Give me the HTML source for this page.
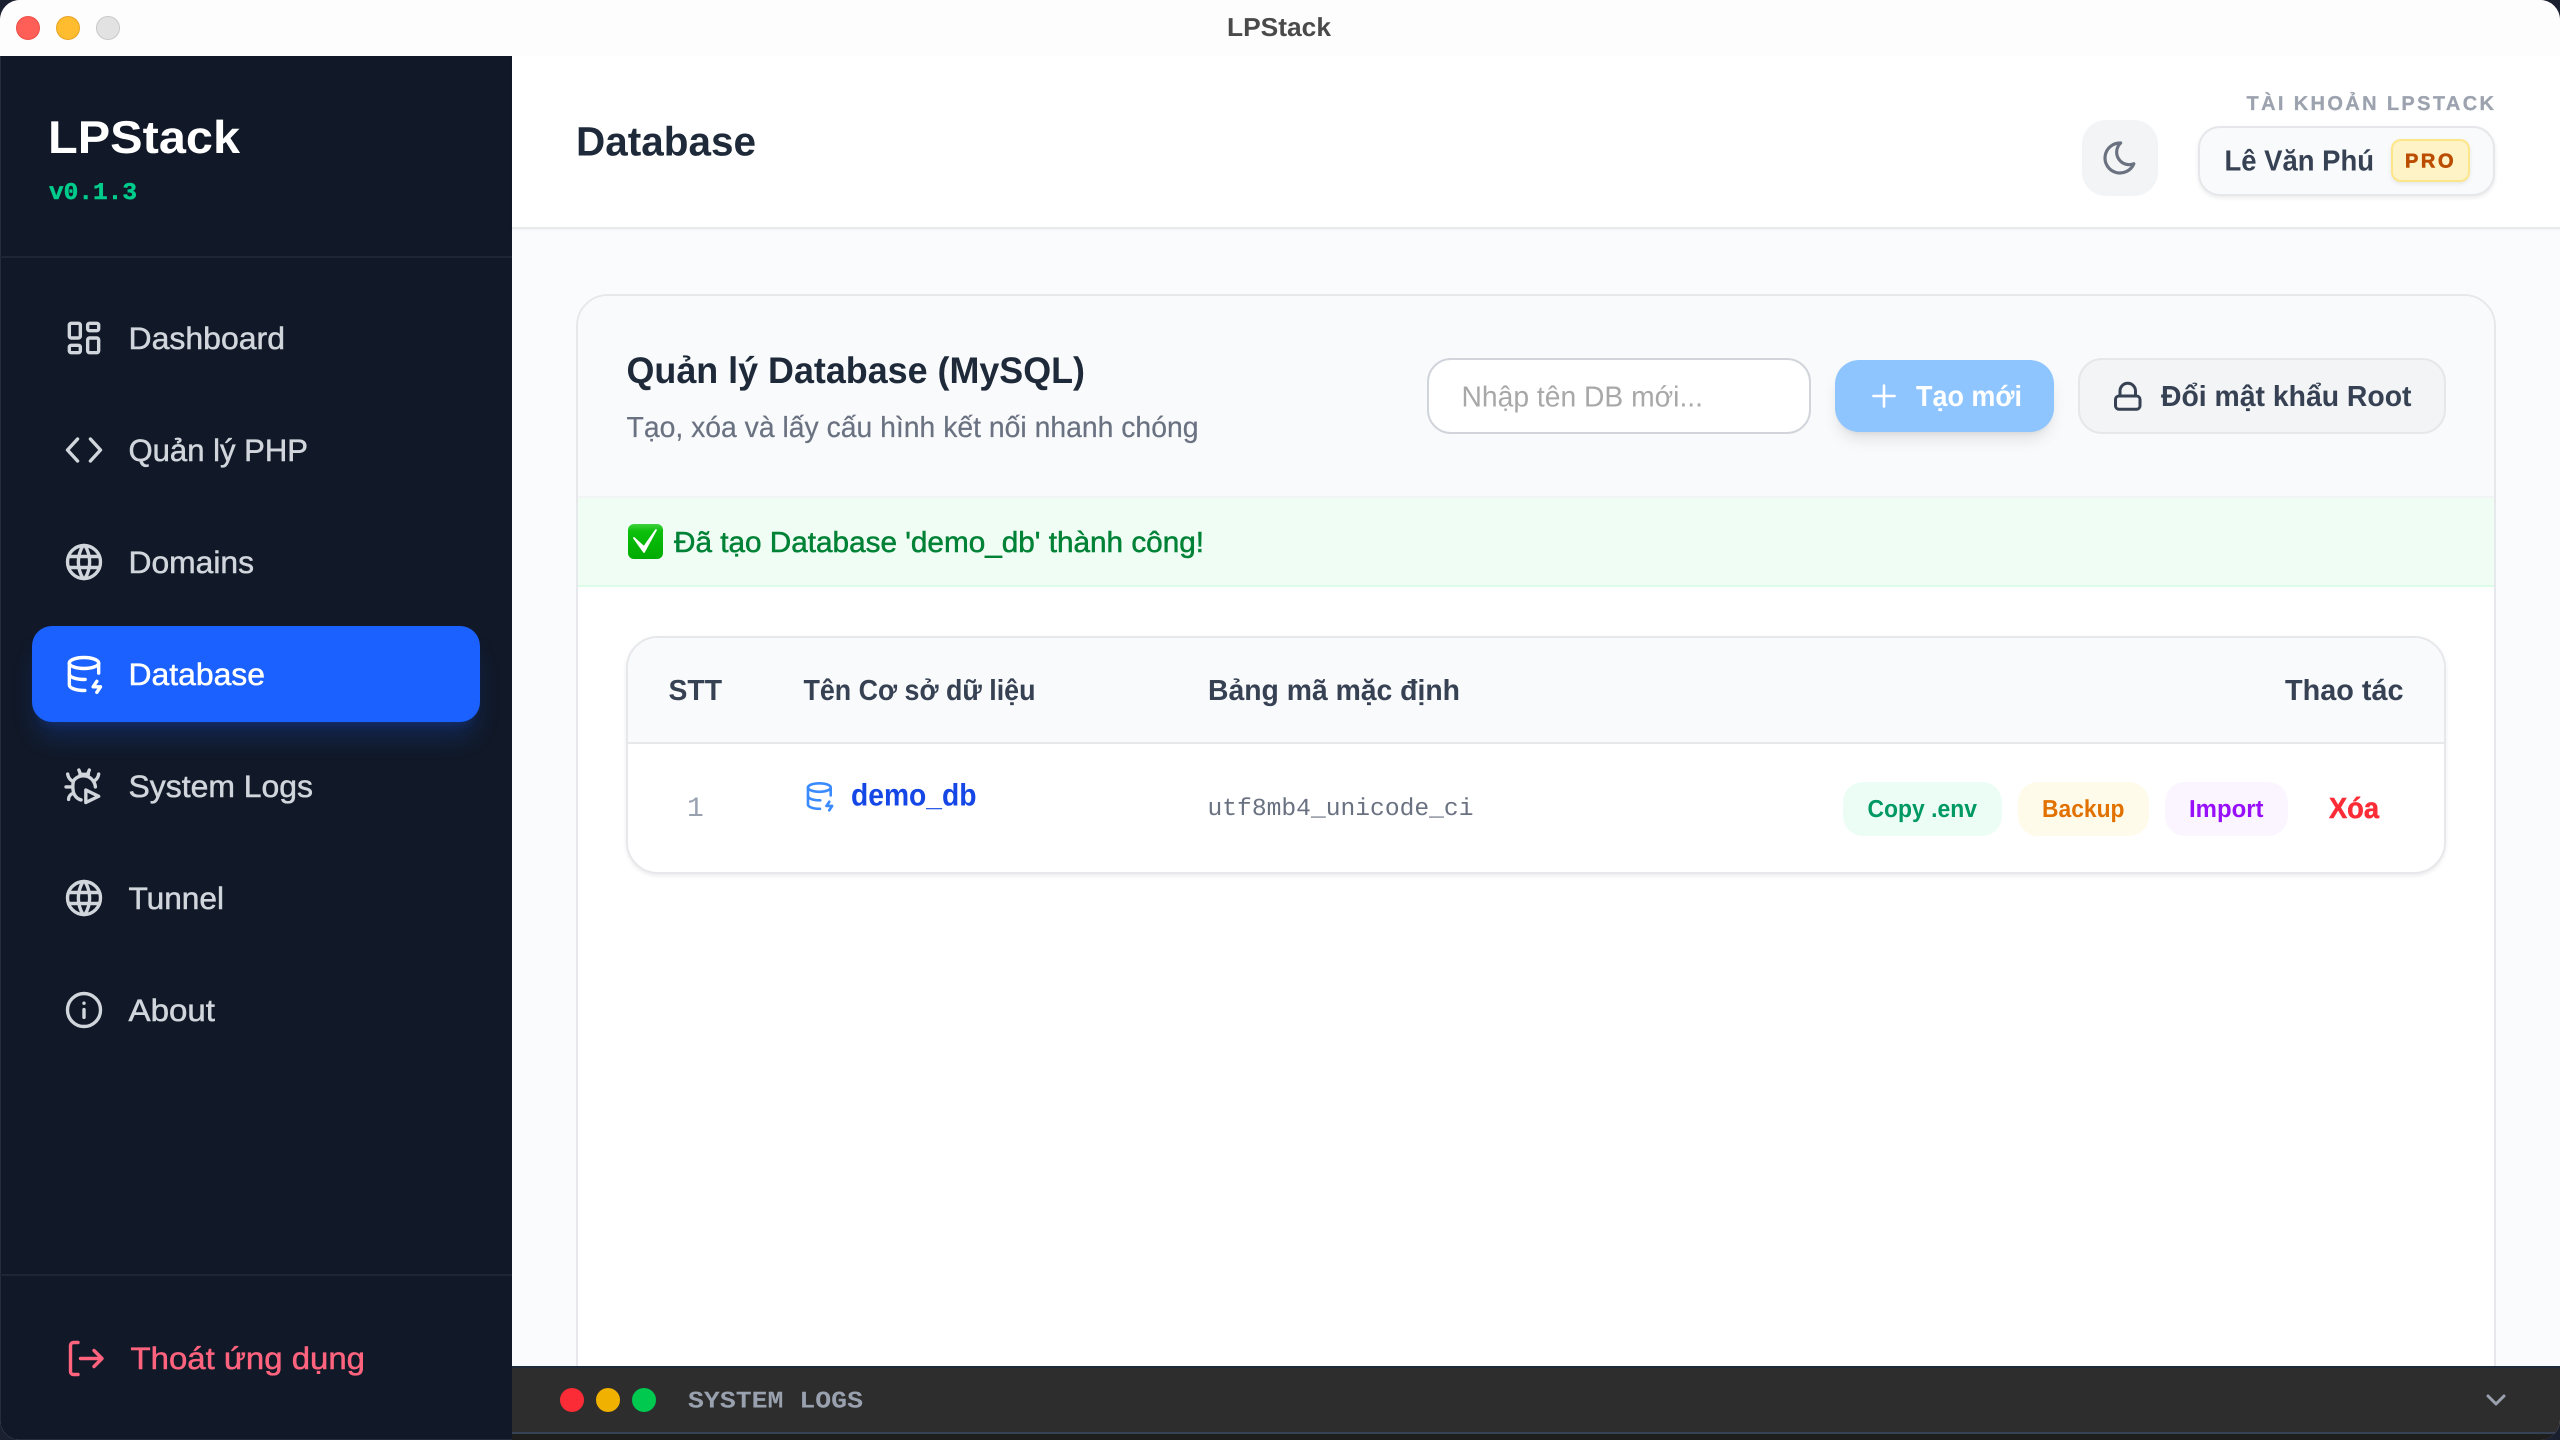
<!DOCTYPE html>
<html lang="vi">
<head>
<meta charset="utf-8">
<title>LPStack</title>
<style>
html,body{margin:0;padding:0;width:2560px;height:1440px;overflow:hidden;background:#1b2030}
.a{position:absolute;box-sizing:border-box}
#win{position:absolute;left:0;top:0;width:2560px;height:1440px;border-radius:20px;overflow:hidden;background:#fafbfc}
svg#ov{position:absolute;left:0;top:0;width:2560px;height:1440px;pointer-events:none}
text{font-family:"Liberation Sans","DejaVu Sans",sans-serif;text-rendering:geometricPrecision}
.mono{font-family:"Liberation Mono","DejaVu Sans Mono",monospace}
.b{font-weight:700}
.m{stroke-width:.5px}
.ic{fill:none;stroke-width:1.85;stroke-linecap:round;stroke-linejoin:round}
</style>
</head>
<body>
<div id="win">
  <!-- title bar -->
  <div class="a" style="left:0;top:0;width:2560px;height:56px;background:#fdfdfd"></div>
  <div class="a" style="left:16px;top:16px;width:24px;height:24px;border-radius:50%;background:#ff5f57;border:1px solid #ee4f48"></div>
  <div class="a" style="left:56px;top:16px;width:24px;height:24px;border-radius:50%;background:#febc2e;border:1px solid #e6a526"></div>
  <div class="a" style="left:96px;top:16px;width:24px;height:24px;border-radius:50%;background:#e2e2e2;border:1px solid #c8c8cc"></div>

  <!-- sidebar -->
  <div class="a" style="left:0;top:56px;width:512px;height:1384px;background:#111928;border-left:1px solid #262c3a;border-bottom:1px solid #262c3a"></div>
  <div class="a" style="left:0;top:256px;width:512px;height:2px;background:#1c2635"></div>
  <div class="a" style="left:0;top:1274px;width:512px;height:2px;background:#1c2635"></div>
  <div class="a" style="left:32px;top:626px;width:448px;height:96px;border-radius:20px;background:#1a61ff;box-shadow:0 20px 25px -5px rgba(26,97,255,.2),0 8px 10px -6px rgba(26,97,255,.2)"></div>

  <!-- header -->
  <div class="a" style="left:512px;top:56px;width:2048px;height:173px;background:#fff;border-bottom:2px solid #e8e9ec;box-shadow:0 1px 2px rgba(0,0,0,.04)"></div>
  <div class="a" style="left:2082px;top:120px;width:76px;height:76px;border-radius:24px;background:#f3f4f6"></div>
  <div class="a" style="left:2198px;top:126px;width:297px;height:70px;border-radius:22px;background:#f9fafb;border:2px solid #e5e7eb;box-shadow:0 2px 4px rgba(0,0,0,.08)"></div>
  <div class="a" style="left:2391px;top:139px;width:79px;height:43px;border-radius:10px;background:#fef3c7;border:2px solid #fde68a;box-shadow:0 2px 4px rgba(0,0,0,.08)"></div>

  <!-- card -->
  <div class="a" style="left:576px;top:294px;width:1920px;height:1200px;border-radius:32px;background:#fff;border:2px solid #e7e8eb;overflow:hidden">
    <div class="a" style="left:0;top:0;width:1916px;height:200px;background:#f9fafb"></div>
    <div class="a" style="left:0;top:200px;width:1916px;height:91px;background:#f0fdf4;border-top:2px solid #f3f4f6;border-bottom:2px solid #dcfce7"></div>
  </div>
  <div class="a" style="left:1427px;top:358px;width:384px;height:76px;border-radius:24px;background:#fff;border:2px solid #d1d5db"></div>
  <div class="a" style="left:1835px;top:360px;width:219px;height:72px;border-radius:24px;background:#8ec5ff;box-shadow:0 10px 15px -3px rgba(0,0,0,.1),0 4px 6px -4px rgba(0,0,0,.1)"></div>
  <div class="a" style="left:2078px;top:358px;width:368px;height:76px;border-radius:24px;background:#f3f4f6;border:2px solid #e5e7eb"></div>

  <!-- table -->
  <div class="a" style="left:626px;top:636px;width:1820px;height:238px;border-radius:32px;background:#fff;border:2px solid #e7e8eb;box-shadow:0 2px 4px rgba(0,0,0,.08);overflow:hidden">
    <div class="a" style="left:0;top:0;width:1816px;height:106px;background:#f9fafb;border-bottom:2px solid #e7e8eb"></div>
  </div>
  <div class="a" style="left:1843px;top:782px;width:159px;height:54px;border-radius:20px;background:#ecfdf5"></div>
  <div class="a" style="left:2018px;top:782px;width:131px;height:54px;border-radius:20px;background:#fffbeb"></div>
  <div class="a" style="left:2165px;top:782px;width:123px;height:54px;border-radius:20px;background:#faf5ff"></div>

  <!-- log bar -->
  <div class="a" style="left:512px;top:1366px;width:2048px;height:74px;background:#2d2d2d;border-top:2px solid #1e2939"></div>
  <div class="a" style="left:512px;top:1432px;width:2048px;height:2px;background:#364153"></div>
  <div class="a" style="left:512px;top:1434px;width:2048px;height:6px;background:#1e1e1e"></div>
  <div class="a" style="left:560px;top:1388px;width:24px;height:24px;border-radius:50%;background:#fb2c36"></div>
  <div class="a" style="left:596px;top:1388px;width:24px;height:24px;border-radius:50%;background:#f0b100"></div>
  <div class="a" style="left:632px;top:1388px;width:24px;height:24px;border-radius:50%;background:#00c950"></div>

  <svg id="ov" xmlns="http://www.w3.org/2000/svg" viewBox="0 0 2560 1440">
    <!-- title bar -->
    <text x="1227" y="36" font-size="26" class="b" fill="#4a4a4a" textLength="104" lengthAdjust="spacingAndGlyphs">LPStack</text>

    <!-- logo -->
    <text x="48" y="153" font-size="46" class="b" fill="#fff" textLength="192" lengthAdjust="spacingAndGlyphs">LPStack</text>
    <text x="49" y="199" font-size="24" class="mono b m" fill="#00cc8c" stroke="#00cc8c" textLength="88" lengthAdjust="spacingAndGlyphs">v0.1.3</text>

    <!-- nav text -->
    <g font-size="31">
      <text x="128.5" y="349" class="m" fill="#d1d5dc" stroke="#d1d5dc" textLength="156.5" lengthAdjust="spacingAndGlyphs">Dashboard</text>
      <text x="128.5" y="461" class="m" fill="#d1d5dc" stroke="#d1d5dc" textLength="179.5" lengthAdjust="spacingAndGlyphs">Quản lý PHP</text>
      <text x="128.5" y="573" class="m" fill="#d1d5dc" stroke="#d1d5dc" textLength="125.5" lengthAdjust="spacingAndGlyphs">Domains</text>
      <text x="128.5" y="685" class="m" fill="#fff" stroke="#fff" textLength="136.5" lengthAdjust="spacingAndGlyphs">Database</text>
      <text x="128.5" y="797" class="m" fill="#d1d5dc" stroke="#d1d5dc" textLength="184.5" lengthAdjust="spacingAndGlyphs">System Logs</text>
      <text x="128.5" y="909" class="m" fill="#d1d5dc" stroke="#d1d5dc" textLength="95.5" lengthAdjust="spacingAndGlyphs">Tunnel</text>
      <text x="128.5" y="1021" class="m" fill="#d1d5dc" stroke="#d1d5dc" textLength="86.5" lengthAdjust="spacingAndGlyphs">About</text>
      <text x="130.5" y="1369" class="m" fill="#ff637e" stroke="#ff637e" textLength="234.5" lengthAdjust="spacingAndGlyphs">Thoát ứng dụng</text>
    </g>

    <!-- nav icons -->
    <g transform="translate(62 316) scale(1.8333)" class="ic" stroke="#d1d5dc">
      <path d="M5 4h4a1 1 0 0 1 1 1v6a1 1 0 0 1 -1 1h-4a1 1 0 0 1 -1 -1v-6a1 1 0 0 1 1 -1"/>
      <path d="M5 16h4a1 1 0 0 1 1 1v2a1 1 0 0 1 -1 1h-4a1 1 0 0 1 -1 -1v-2a1 1 0 0 1 1 -1"/>
      <path d="M15 12h4a1 1 0 0 1 1 1v6a1 1 0 0 1 -1 1h-4a1 1 0 0 1 -1 -1v-6a1 1 0 0 1 1 -1"/>
      <path d="M15 4h4a1 1 0 0 1 1 1v2a1 1 0 0 1 -1 1h-4a1 1 0 0 1 -1 -1v-2a1 1 0 0 1 1 -1"/>
    </g>
    <g transform="translate(62 428) scale(1.8333)" class="ic" stroke="#d1d5dc">
      <path d="M8.5 6L3 12l5.5 6"/><path d="M15.5 6L21 12l-5.5 6"/>
    </g>
    <g transform="translate(62 540) scale(1.8333)" class="ic" stroke="#d1d5dc">
      <path d="M3 12a9 9 0 1 0 18 0a9 9 0 0 0 -18 0"/><path d="M3.6 9h16.8"/><path d="M3.6 15h16.8"/><path d="M11.5 3a17 17 0 0 0 0 18"/><path d="M12.5 3a17 17 0 0 1 0 18"/>
    </g>
    <g transform="translate(62 652) scale(1.8333)" class="ic" stroke="#fff">
      <path d="M4 6c0 1.657 3.582 3 8 3s8 -1.343 8 -3s-3.582 -3 -8 -3s-8 1.343 -8 3"/>
      <path d="M4 6v6c0 1.657 3.582 3 8 3c.21 0 .42 -.003 .626 -.01"/>
      <path d="M20 11.5v-5.5"/>
      <path d="M4 12v6c0 1.657 3.582 3 8 3c.15 0 .3 -.002 .448 -.005"/>
      <path d="M19 16l-2 3h4l-2 3"/>
    </g>
    <g transform="translate(62 764) scale(1.8333)" class="ic" stroke="#d1d5dc">
      <path d="M9.2 3.3l.8 2"/><path d="M14.9 3.3l-.8 2"/><path d="M9.8 5.6h4.6"/>
      <path d="M3.1 5.5c.2 1.5 1 2.8 2.2 3.6"/><path d="M20 5.5c-.2 1.5 -1 2.8 -2.2 3.6"/>
      <path d="M18.2 12.5A6.6 6.6 0 0 0 6.4 9C5.6 11 5.8 15.4 6.9 16.9c.8 1.4 2 2.3 3.5 2.7"/>
      <path d="M2.2 12.5h3.6"/><path d="M3.6 19.3c0-1.5 1-2.8 2.4-3.3"/>
      <path d="M13 14.2v6.8l7-3.4z"/>
    </g>
    <g transform="translate(62 876) scale(1.8333)" class="ic" stroke="#d1d5dc">
      <path d="M3 12a9 9 0 1 0 18 0a9 9 0 0 0 -18 0"/><path d="M3.6 9h16.8"/><path d="M3.6 15h16.8"/><path d="M11.5 3a17 17 0 0 0 0 18"/><path d="M12.5 3a17 17 0 0 1 0 18"/>
    </g>
    <g transform="translate(62 988) scale(1.8333)" class="ic" stroke="#d1d5dc">
      <path d="M3 12a9 9 0 1 0 18 0a9 9 0 0 0 -18 0"/><path d="M12 8.3h.01"/><path d="M12 11.8v4.2"/>
    </g>
    <g fill="none" stroke="#ff637e" stroke-width="3.4" stroke-linecap="round" stroke-linejoin="round">
      <path d="M78 1342.5h-4.5a3 3 0 0 0 -3 3v26a3 3 0 0 0 3 3h4.5"/>
      <path d="M80.5 1358.5h20"/><path d="M94 1350.5l8 8l-8 8"/>
    </g>

    <!-- header -->
    <text x="576" y="155.5" font-size="41" class="b" fill="#1e2939" textLength="180" lengthAdjust="spacingAndGlyphs">Database</text>
    <g transform="translate(2100 138) scale(1.6667)" class="ic" stroke="#6a7282" style="stroke-width:1.9">
      <path d="M12 3c.132 0 .263 0 .393 0a7.5 7.5 0 0 0 7.92 12.446a9 9 0 1 1 -8.313 -12.454z"/>
    </g>
    <text x="2246.5" y="110" font-size="20" class="b" fill="#9ca3af" stroke="#9ca3af" stroke-width=".3" textLength="247.5" lengthAdjust="spacing">TÀI KHOẢN LPSTACK</text>
    <text x="2224.5" y="170.5" font-size="29" class="b" fill="#364153" textLength="149.5" lengthAdjust="spacingAndGlyphs">Lê Văn Phú</text>
    <text x="2405" y="167.5" font-size="20" class="b" fill="#bb4d00" stroke="#bb4d00" stroke-width=".6" textLength="48.5" lengthAdjust="spacing">PRO</text>

    <!-- card header -->
    <text x="626.5" y="383" font-size="37" class="b" fill="#1e2939" textLength="458.5" lengthAdjust="spacingAndGlyphs">Quản lý Database (MySQL)</text>
    <text x="626.5" y="437" font-size="29" fill="#6a7282" stroke="#6a7282" stroke-width=".2" textLength="572" lengthAdjust="spacingAndGlyphs">Tạo, xóa và lấy cấu hình kết nối nhanh chóng</text>
    <text x="1461.5" y="406.5" font-size="29" fill="#a8a8a8" textLength="241.5" lengthAdjust="spacingAndGlyphs">Nhập tên DB mới...</text>
    <path d="M1884 385.5v21M1873.5 396h21" fill="none" stroke="#fff" stroke-width="2.6" stroke-linecap="round"/>
    <text x="1916" y="406" font-size="29" class="b" fill="#fff" textLength="106" lengthAdjust="spacingAndGlyphs">Tạo mới</text>
    <g fill="none" stroke="#364153" stroke-width="3" stroke-linecap="round" stroke-linejoin="round">
      <rect x="2115.5" y="396" width="24.5" height="13.2" rx="3.5"/>
      <path d="M2120 396v-5a7.75 7.75 0 0 1 15.5 0v5"/>
    </g>
    <text x="2161" y="406" font-size="29" class="b" fill="#364153" textLength="250.5" lengthAdjust="spacingAndGlyphs">Đổi mật khẩu Root</text>

    <!-- alert -->
    <defs><linearGradient id="gr" x1="0" y1="0" x2="0" y2="1"><stop offset="0" stop-color="#3fd23f"/><stop offset=".2" stop-color="#0cc00c"/><stop offset="1" stop-color="#00ab00"/></linearGradient></defs>
    <rect x="628" y="524" width="35" height="35" rx="6" fill="url(#gr)"/>
    <path d="M634 538l10 14l12 -22l-12 17z" fill="#fff" stroke="#fff" stroke-width="1.8" stroke-linejoin="round"/>
    <text x="674" y="552" font-size="29" class="m" fill="#008236" stroke="#008236" textLength="530" lengthAdjust="spacingAndGlyphs">Đã tạo Database 'demo_db' thành công!</text>

    <!-- table -->
    <g font-size="29" class="b" fill="#364153">
      <text x="668.5" y="700" textLength="53.5" lengthAdjust="spacingAndGlyphs">STT</text>
      <text x="803.5" y="700" textLength="232" lengthAdjust="spacingAndGlyphs">Tên Cơ sở dữ liệu</text>
      <text x="1208" y="700" textLength="252" lengthAdjust="spacingAndGlyphs">Bảng mã mặc định</text>
      <text x="2285" y="700" textLength="118.5" lengthAdjust="spacingAndGlyphs">Thao tác</text>
    </g>
    <text x="687" y="816" font-size="28" class="mono" fill="#99a1af">1</text>
    <g transform="translate(802.3 779) scale(1.42)" class="ic" stroke="#3a8bff">
      <path d="M4 6c0 1.657 3.582 3 8 3s8 -1.343 8 -3s-3.582 -3 -8 -3s-8 1.343 -8 3"/>
      <path d="M4 6v6c0 1.657 3.582 3 8 3c.21 0 .42 -.003 .626 -.01"/>
      <path d="M20 11.5v-5.5"/>
      <path d="M4 12v6c0 1.657 3.582 3 8 3c.15 0 .3 -.002 .448 -.005"/>
      <path d="M19 16l-2 3h4l-2 3"/>
    </g>
    <text x="851" y="805.5" font-size="31" class="b" fill="#1447e6" textLength="125.5" lengthAdjust="spacingAndGlyphs">demo_db</text>
    <text x="1207.5" y="815" font-size="24.5" class="mono" fill="#6a7282" textLength="266" lengthAdjust="spacingAndGlyphs">utf8mb4_unicode_ci</text>
    <g font-size="24.5" class="b">
      <text x="1867.5" y="817" fill="#009966" textLength="109.5" lengthAdjust="spacingAndGlyphs">Copy .env</text>
      <text x="2042" y="817" fill="#e17100" textLength="82.5" lengthAdjust="spacingAndGlyphs">Backup</text>
      <text x="2189" y="817" fill="#9810fa" textLength="74.5" lengthAdjust="spacingAndGlyphs">Import</text>
    </g>
    <text x="2329" y="818" font-size="29" class="b" fill="#fb2c36" stroke="#fb2c36" stroke-width=".5" textLength="50" lengthAdjust="spacingAndGlyphs">Xóa</text>

    <!-- log bar -->
    <text x="688" y="1407.5" font-size="24" class="mono b" fill="#99a1af" textLength="175" lengthAdjust="spacingAndGlyphs">SYSTEM LOGS</text>
    <path d="M2488 1396l8 8l8 -8" fill="none" stroke="#99a1af" stroke-width="3" stroke-linecap="round" stroke-linejoin="round"/>
  </svg>
</div>
</body>
</html>
